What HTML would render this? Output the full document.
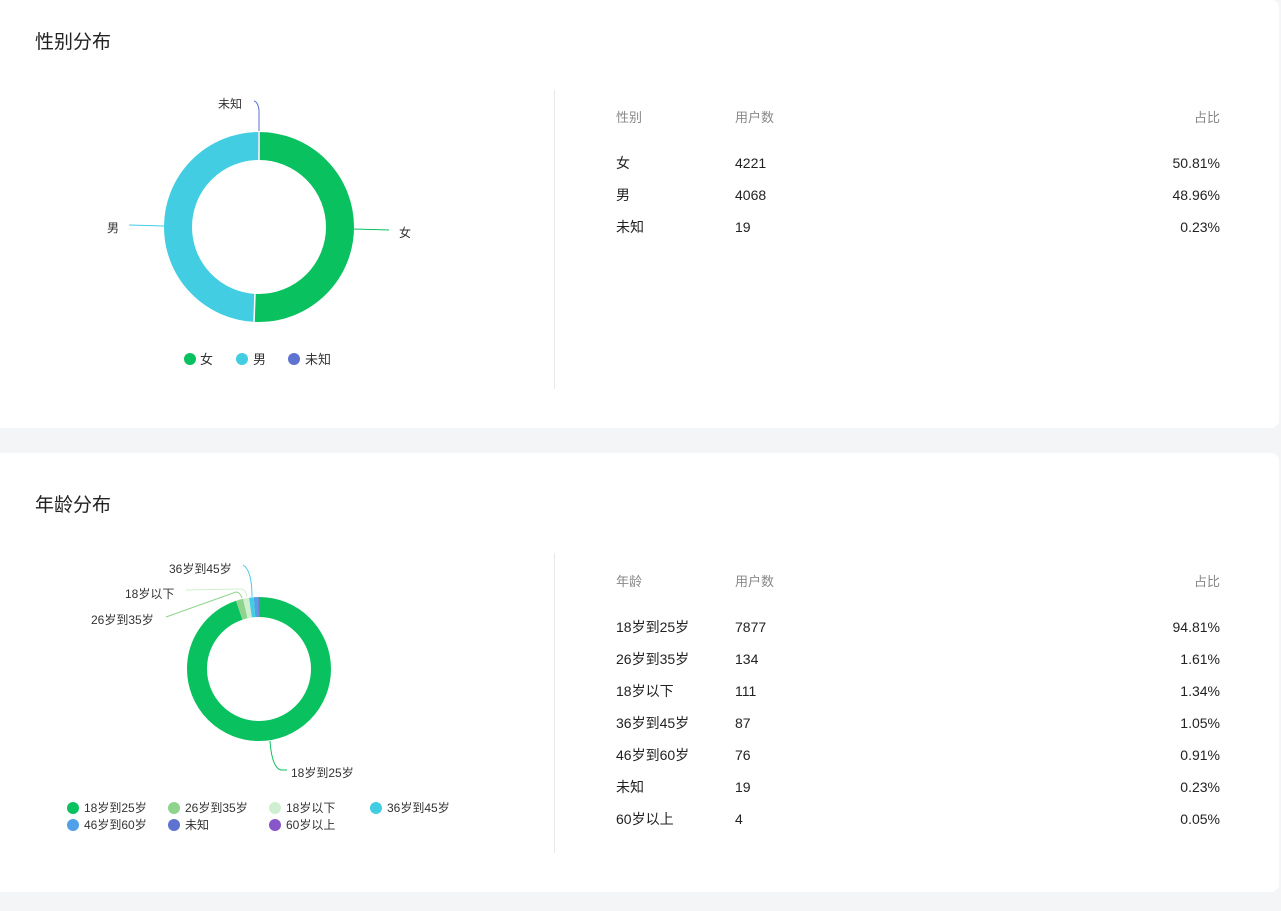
<!DOCTYPE html>
<html><head><meta charset="utf-8"><style>
*{margin:0;padding:0;box-sizing:border-box}
body{width:1281px;height:911px;background:#f4f5f7;font-family:"Liberation Sans","Noto Sans CJK SC",sans-serif;position:relative;overflow:hidden;color:#222}
.card{position:absolute;left:0;width:1279px;background:#fff;border-radius:0 8px 8px 0}
.title{position:absolute;left:35px;font-size:19px;color:#222}
.div{position:absolute;left:554px;width:1px;background:#e8e8e8}
.t{position:absolute;font-size:14px;line-height:16px;white-space:nowrap}
.h{color:#888;font-size:13px}
.r{text-align:right;width:100px}
svg{position:absolute;left:0;top:0}
svg text{font-family:"Liberation Sans","Noto Sans CJK SC",sans-serif}
</style></head><body>
<div class="card" style="top:0;height:428px"></div>
<div class="card" style="top:453px;height:439px"></div>
<div class="title" style="top:27px">性别分布</div>
<div class="title" style="top:490px">年龄分布</div>
<div class="div" style="top:90px;height:299px"></div>
<div class="div" style="top:553px;height:300px"></div>

<div class="t h" style="left:616px;top:110px">性别</div>
<div class="t h" style="left:735px;top:110px">用户数</div>
<div class="t h r" style="left:1120px;top:110px">占比</div>
<div class="t" style="left:616px;top:155px">女</div><div class="t" style="left:735px;top:155px">4221</div><div class="t r" style="left:1120px;top:155px">50.81%</div>
<div class="t" style="left:616px;top:187px">男</div><div class="t" style="left:735px;top:187px">4068</div><div class="t r" style="left:1120px;top:187px">48.96%</div>
<div class="t" style="left:616px;top:219px">未知</div><div class="t" style="left:735px;top:219px">19</div><div class="t r" style="left:1120px;top:219px">0.23%</div>

<div class="t h" style="left:616px;top:574px">年龄</div>
<div class="t h" style="left:735px;top:574px">用户数</div>
<div class="t h r" style="left:1120px;top:574px">占比</div>
<div class="t" style="left:616px;top:619px">18岁到25岁</div><div class="t" style="left:735px;top:619px">7877</div><div class="t r" style="left:1120px;top:619px">94.81%</div>
<div class="t" style="left:616px;top:651px">26岁到35岁</div><div class="t" style="left:735px;top:651px">134</div><div class="t r" style="left:1120px;top:651px">1.61%</div>
<div class="t" style="left:616px;top:683px">18岁以下</div><div class="t" style="left:735px;top:683px">111</div><div class="t r" style="left:1120px;top:683px">1.34%</div>
<div class="t" style="left:616px;top:715px">36岁到45岁</div><div class="t" style="left:735px;top:715px">87</div><div class="t r" style="left:1120px;top:715px">1.05%</div>
<div class="t" style="left:616px;top:747px">46岁到60岁</div><div class="t" style="left:735px;top:747px">76</div><div class="t r" style="left:1120px;top:747px">0.91%</div>
<div class="t" style="left:616px;top:779px">未知</div><div class="t" style="left:735px;top:779px">19</div><div class="t r" style="left:1120px;top:779px">0.23%</div>
<div class="t" style="left:616px;top:811px">60岁以上</div><div class="t" style="left:735px;top:811px">4</div><div class="t r" style="left:1120px;top:811px">0.05%</div>

<svg width="1281" height="911">
<g transform="rotate(-90 259 227)" fill="none" stroke-width="28">
<circle cx="259" cy="227" r="81" stroke="#0ac160" stroke-dasharray="258.6 600" stroke-dashoffset="0"/>
<circle cx="259" cy="227" r="81" stroke="#42cde3" stroke-dasharray="249.2 600" stroke-dashoffset="-258.6"/>
<circle cx="259" cy="227" r="81" stroke="#5e72d0" stroke-dasharray="1.2 600" stroke-dashoffset="-507.8"/>
</g>
<line x1="259" y1="131" x2="259" y2="161" stroke="#fff" stroke-width="1.5"/>
<line x1="255" y1="293" x2="254" y2="323" stroke="#fff" stroke-width="1.5"/>
<path d="M353 229 L389 230" stroke="#0ac160" fill="none"/>
<path d="M164 226 L129 225" stroke="#42cde3" fill="none"/>
<path d="M259 131 L259 110 Q258 102 254 101" stroke="#5e72d0" fill="none"/>
<text x="399" y="237" font-size="12" fill="#333">女</text>
<text x="107" y="232" font-size="12" fill="#333">男</text>
<text x="218" y="108" font-size="12" fill="#333">未知</text>
<circle cx="190" cy="359" r="6" fill="#0ac160"/><text x="200" y="364" font-size="13" fill="#333">女</text>
<circle cx="242" cy="359" r="6" fill="#42cde3"/><text x="253" y="364" font-size="13" fill="#333">男</text>
<circle cx="294" cy="359" r="6" fill="#5e72d0"/><text x="305" y="364" font-size="13" fill="#333">未知</text>

<g transform="rotate(-90 259 669)" fill="none" stroke-width="20">
<circle cx="259" cy="669" r="62" stroke="#0ac160" stroke-dasharray="369.3 600"/>
<circle cx="259" cy="669" r="62" stroke="#8fd38d" stroke-dasharray="6.3 600" stroke-dashoffset="-369.3"/>
<circle cx="259" cy="669" r="62" stroke="#d0efd0" stroke-dasharray="5.2 600" stroke-dashoffset="-375.6"/>
<circle cx="259" cy="669" r="62" stroke="#42cde3" stroke-dasharray="4.1 600" stroke-dashoffset="-380.8"/>
<circle cx="259" cy="669" r="62" stroke="#4fa0e8" stroke-dasharray="3.5 600" stroke-dashoffset="-384.9"/>
<circle cx="259" cy="669" r="62" stroke="#5e72d0" stroke-dasharray="0.9 600" stroke-dashoffset="-388.4"/>
</g>
<path d="M270 741 Q272 768 281 770 L287 770" stroke="#0ac160" fill="none"/>
<path d="M242 598 Q240 592 236 592 L166 617" stroke="#8fd38d" fill="none"/>
<path d="M247 597 Q246 589 240 589 L186 590" stroke="#d0efd0" fill="none"/>
<path d="M252 597 Q252 570 243 565" stroke="#42cde3" fill="none"/>
<text x="291" y="777" font-size="12" fill="#333">18岁到25岁</text>
<text x="91" y="624" font-size="12" fill="#333">26岁到35岁</text>
<text x="125" y="598" font-size="12" fill="#333">18岁以下</text>
<text x="169" y="573" font-size="12" fill="#333">36岁到45岁</text>
<g font-size="12" fill="#333">
<circle cx="73" cy="808" r="6" fill="#0ac160"/><text x="84" y="812">18岁到25岁</text>
<circle cx="174" cy="808" r="6" fill="#8fd38d"/><text x="185" y="812">26岁到35岁</text>
<circle cx="275" cy="808" r="6" fill="#d0efd0"/><text x="286" y="812">18岁以下</text>
<circle cx="376" cy="808" r="6" fill="#42cde3"/><text x="387" y="812">36岁到45岁</text>
<circle cx="73" cy="825" r="6" fill="#4fa0e8"/><text x="84" y="829">46岁到60岁</text>
<circle cx="174" cy="825" r="6" fill="#5e72d0"/><text x="185" y="829">未知</text>
<circle cx="275" cy="825" r="6" fill="#8856c8"/><text x="286" y="829">60岁以上</text>
</g>
</svg>
</body></html>
